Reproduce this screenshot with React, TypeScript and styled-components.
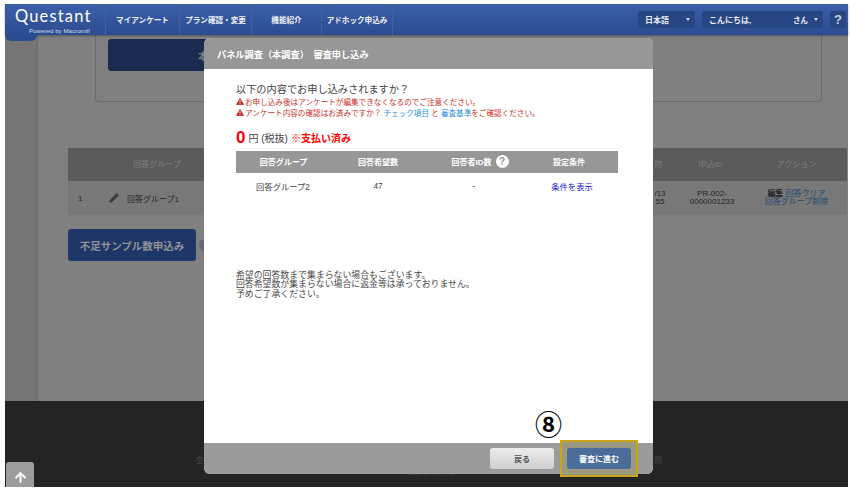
import styled, { createGlobalStyle } from "styled-components"
import { ArrowUp, Pencil } from "lucide-react"

const jp = `"Liberation Sans", "Noto Sans CJK JP", sans-serif`

const GlobalStyle = createGlobalStyle`
  html, body {
    margin: 0;
    padding: 0;
    background: #fff;
    overflow: hidden;
  }
  * {
    box-sizing: border-box;
  }
`

const WarnIcon = () => (
  <WarnSvg viewBox="0 0 16 14" aria-hidden="true">
    <path d="M8 .5 15.6 13.5H.4Z" fill="#b92a26" stroke="#b92a26" strokeLinejoin="round" />
    <path d="M8 4.5v4.5M8 10.5v1.6" stroke="#fff" strokeWidth="1.8" />
  </WarnSvg>
)

const App = () => {
  return (
    <>
      <GlobalStyle />
      <Screen>
        <Header>
          <Logo>
            <LogoName>Questant</LogoName>
            <LogoSub>Powered by Macromill</LogoSub>
          </Logo>
          <NavItem $w={74}>マイアンケート</NavItem>
          <NavItem $w={72}>プラン確認・変更</NavItem>
          <NavItem $w={70}>機能紹介</NavItem>
          <NavItem $w={71}>アドホック申込み</NavItem>
          <HeaderRight>
            <Pill $w={57}>
              日本語
              <Caret />
            </Pill>
            <Pill $w={121}>
              こんにちは,
              <UserName>さん</UserName>
              <Caret />
            </Pill>
            <Help>?</Help>
          </HeaderRight>
        </Header>

        <Main>
          <SideBand />
          <Content>
            <Panel>
              <PanelButton>本</PanelButton>
            </Panel>
            <Table>
              <TableHead>
                <Cell $w={178}>回答グループ</Cell>
                <Cell $w={396} />
                <Cell $w={33}>時</Cell>
                <Cell $w={71}>申込ID</Cell>
                <Cell $w={101}>アクション</Cell>
              </TableHead>
              <TableRow>
                <NumCell>1</NumCell>
                <GroupCell>
                  <Pencil size={10} fill="#3a3a3a" color="#3a3a3a" />
                  回答グループ1
                </GroupCell>
                <Cell $w={422} />
                <Cell $w={36}>
                  /13
                  <br />
                  55
                </Cell>
                <Cell $w={68}>
                  PR-002-
                  <br />
                  0000001233
                </Cell>
                <Cell $w={101}>
                  <b>編集</b> <DimLink>回答クリア</DimLink>
                  <br />
                  <DimLink>回答グループ削除</DimLink>
                </Cell>
              </TableRow>
            </Table>
            <ShortageRow>
              <ShortageButton>不足サンプル数申込み</ShortageButton>
              <RoundHint />
            </ShortageRow>
          </Content>
        </Main>

        <Footer>
          <FooterLinks>
            <span>会</span>
            <span>問</span>
          </FooterLinks>
          <Copyright>© Macromill, Inc.</Copyright>
          <TopButton>
            <ArrowUp size={15} strokeWidth={3.2} />
          </TopButton>
        </Footer>

        <Modal>
          <ModalHeader>パネル調査（本調査）　審査申し込み</ModalHeader>
          <ModalBody>
            <Question>以下の内容でお申し込みされますか？</Question>
            <Warning>
              <WarnIcon />
              お申し込み後はアンケートが編集できなくなるのでご注意ください。
            </Warning>
            <Warning>
              <WarnIcon />
              アンケート内容の確認はお済みですか？ <BlueLink>チェック項目</BlueLink> と <BlueLink>審査基準</BlueLink>をご確認ください。
            </Warning>
            <Price>
              <Zero>0</Zero>
              <Yen>円 (税抜)</Yen>
              <Paid>※支払い済み</Paid>
            </Price>
            <ModalTable>
              <ModalHeadRow>
                <ModalCol>回答グループ</ModalCol>
                <ModalCol>回答希望数</ModalCol>
                <ModalCol>
                  回答者ID数
                  <HelpDot>?</HelpDot>
                </ModalCol>
                <ModalCol>設定条件</ModalCol>
              </ModalHeadRow>
              <ModalRow>
                <ModalCol>回答グループ2</ModalCol>
                <ModalCol>47</ModalCol>
                <ModalCol>-</ModalCol>
                <ModalCol>
                  <ConditionLink>条件を表示</ConditionLink>
                </ModalCol>
              </ModalRow>
            </ModalTable>
            <Notice>
              希望の回答数まで集まらない場合もございます。
              <br />
              回答希望数が集まらない場合に返金等は承っておりません。
              <br />
              予めご了承ください。
            </Notice>
          </ModalBody>
          <ModalFooter>
            <BackButton>戻る</BackButton>
            <Highlight>
              <NextButton>審査に進む</NextButton>
            </Highlight>
            <StepMark>⑧</StepMark>
          </ModalFooter>
        </Modal>
      </Screen>
    </>
  )
}

const Screen = styled.div`
  position: relative;
  width: 843px;
  height: 483px;
  margin: 4px 0 0 5px;
  background: #808080;
  display: flex;
  flex-direction: column;
  font-family: ${jp};
`

const Header = styled.header`
  position: relative;
  height: 31px;
  flex: none;
  display: flex;
  align-items: stretch;
  padding-right: 2px;
  background: linear-gradient(#3c5fa8, #2c4c92);
  box-shadow: 0 1px 2px rgba(0, 0, 0, 0.35);
  z-index: 1;
`

const Logo = styled.div`
  position: relative;
  width: 101px;
  flex: none;
  color: #fff;
  border-right: 1px solid #40619f;
  &::after {
    content: "";
    position: absolute;
    left: 0;
    top: 31px;
    width: 32px;
    height: 6px;
    background: #2c4c92;
    border-radius: 0 0 16px 16px;
  }
`

const LogoName = styled.div`
  font: 400 16.5px/1 "Lato", sans-serif;
  letter-spacing: 1.15px;
  margin: 4px 0 0 10px;
`

const LogoSub = styled.div`
  font: 400 6.2px/1 "Liberation Sans", sans-serif;
  color: #cfd8ea;
  margin: 3px 0 0 24px;
`

const NavItem = styled.div<{ $w: number }>`
  width: ${(p) => p.$w}px;
  flex: none;
  display: flex;
  align-items: center;
  justify-content: center;
  color: #eef1f7;
  font-size: 7.6px;
  font-weight: 700;
  white-space: nowrap;
  border-right: 1px solid #40619f;
`

const HeaderRight = styled.div`
  margin-left: auto;
  display: flex;
  align-items: center;
  gap: 7px;
`

const Pill = styled.div<{ $w: number }>`
  width: ${(p) => p.$w}px;
  height: 17px;
  padding: 0 5px 0 7px;
  display: flex;
  align-items: center;
  background: #294684;
  border-radius: 3px;
  color: #e8ecf4;
  font-size: 8px;
  font-weight: 700;
`

const UserName = styled.span`
  margin-left: auto;
  margin-right: 6px;
  font-size: 7.5px;
`

const Caret = styled.i`
  width: 0;
  height: 0;
  margin-left: auto;
  border: 2.5px solid transparent;
  border-top: 3px solid #d5dbe8;
  border-bottom: 0;
  ${UserName} + & {
    margin-left: 0;
  }
`

const Help = styled.div`
  width: 16px;
  height: 17px;
  display: flex;
  align-items: center;
  justify-content: center;
  background: #294684;
  border-radius: 3px;
  color: #c9d1e2;
  font: 700 13px/1 "Liberation Sans", sans-serif;
`

const Main = styled.main`
  flex: 1;
  display: flex;
  min-height: 0;
`

const SideBand = styled.div`
  width: 32px;
  flex: none;
  background: #757575;
`

const Content = styled.div`
  flex: 1;
  min-width: 0;
  padding-left: 30px;
  display: flex;
  flex-direction: column;
  align-items: flex-start;
  border-left: 1px solid #6e6e6e;
`

const Panel = styled.div`
  width: 727px;
  height: 67px;
  margin-left: 27px;
  padding: 4px 0 0 12px;
  border: 1px solid #6b6b6b;
  border-top: 0;
  border-radius: 0 0 4px 4px;
`

const PanelButton = styled.div`
  width: 140px;
  height: 32px;
  padding-left: 90px;
  display: flex;
  align-items: center;
  background: #1b2b50;
  border-radius: 3px;
  color: #7c7c7c;
  font-size: 10px;
  font-weight: 700;
  white-space: nowrap;
`

const Table = styled.div`
  width: 779px;
  margin-top: 46px;
  font-size: 8px;
`

const TableHead = styled.div`
  height: 33px;
  display: flex;
  align-items: center;
  padding-top: 2px;
  background: #5b5b5b;
  color: #7e7e7e;
`

const TableRow = styled.div`
  height: 34px;
  display: flex;
  align-items: center;
  background: #787878;
  color: #262626;
`

const Cell = styled.div<{ $w?: number }>`
  width: ${(p) => p.$w}px;
  flex: none;
  text-align: center;
  line-height: 8.5px;
  white-space: nowrap;
`

const NumCell = styled.div`
  width: 41px;
  flex: none;
  padding-left: 10px;
`

const GroupCell = styled.div`
  width: 111px;
  flex: none;
  display: flex;
  align-items: center;
  gap: 8px;
`

const DimLink = styled.span`
  color: #1f4a70;
`

const ShortageRow = styled.div`
  margin-top: 14px;
  display: flex;
  align-items: center;
  gap: 3px;
`

const ShortageButton = styled.div`
  width: 128px;
  height: 32px;
  display: flex;
  align-items: center;
  justify-content: center;
  background: #1e3768;
  border-radius: 3px;
  color: #8f9196;
  font-size: 10.5px;
  font-weight: 700;
`

const RoundHint = styled.div`
  width: 12px;
  height: 12px;
  background: #6a6a6a;
  border-radius: 50%;
`

const Footer = styled.footer`
  position: relative;
  height: 86px;
  flex: none;
  padding-top: 53px;
  background: #242424;
  color: #4a4a4a;
  font-size: 8px;
`

const FooterLinks = styled.div`
  width: 466px;
  margin-left: 191px;
  display: flex;
  justify-content: space-between;
`

const Copyright = styled.div`
  margin: 3px 0 0 392px;
`

const TopButton = styled.div`
  position: absolute;
  left: 1px;
  bottom: 0;
  width: 28px;
  height: 25px;
  display: flex;
  align-items: center;
  justify-content: center;
  padding-top: 6px;
  background: #9c9c9c;
  border-radius: 3px 3px 0 0;
  color: #fff;
`

const Modal = styled.section`
  position: absolute;
  left: 199px;
  top: 34px;
  width: 449px;
  height: 436px;
  display: flex;
  flex-direction: column;
  background: #fff;
  border-radius: 6px;
  z-index: 2;
`

const ModalHeader = styled.div`
  height: 31px;
  flex: none;
  padding-left: 13px;
  display: flex;
  align-items: center;
  background: #979797;
  border-radius: 6px 6px 0 0;
  color: #fff;
  font-size: 9.2px;
  font-weight: 700;
`

const ModalBody = styled.div`
  flex: 1;
  padding: 14px 35px 0 32px;
  color: #444;
`

const Question = styled.div`
  font-size: 10.2px;
  line-height: 13px;
`

const Warning = styled.div`
  display: flex;
  align-items: center;
  height: 11px;
  color: #c8332e;
  font-size: 7.6px;
  white-space: pre;
`

const WarnSvg = styled.svg`
  width: 8px;
  height: 7px;
  flex: none;
  margin-right: 1px;
`

const BlueLink = styled.span`
  color: #2f8fe0;
`

const Price = styled.div`
  height: 21px;
  margin-top: 8.5px;
  display: flex;
  align-items: center;
`

const Zero = styled.span`
  color: #f00;
  font: 700 17px/1 "Liberation Sans", sans-serif;
  margin-right: 3px;
`

const Yen = styled.span`
  font-size: 10px;
  margin-right: 3px;
`

const Paid = styled.span`
  color: #f00;
  font-size: 10px;
  font-weight: 700;
`

const ModalTable = styled.div`
  width: 382px;
  margin-top: 3px;
  font-size: 8px;
`

const ModalHeadRow = styled.div`
  height: 22px;
  display: grid;
  grid-template-columns: 95px 94px 110px 68px;
  align-items: center;
  background: #979797;
  color: #fff;
  font-weight: 700;
  text-align: center;
`

const ModalRow = styled(ModalHeadRow)`
  height: 26px;
  grid-template-columns: 94px 96px 96px 100px;
  background: #fff;
  color: #444;
  font-weight: 400;
  font-size: 8.3px;
`

const ModalCol = styled.div`
  display: flex;
  align-items: center;
  justify-content: center;
  white-space: nowrap;
`

const HelpDot = styled.span`
  width: 13px;
  height: 13px;
  margin-left: 4px;
  display: inline-flex;
  align-items: center;
  justify-content: center;
  background: #fff;
  border-radius: 50%;
  color: #979797;
  font: 700 10px/1 "Liberation Sans", sans-serif;
`

const ConditionLink = styled.span`
  color: #2222cc;
`

const Notice = styled.div`
  margin-top: 72px;
  font-size: 8.9px;
  line-height: 9.5px;
  color: #4a4a4a;
`

const ModalFooter = styled.div`
  position: relative;
  height: 31px;
  flex: none;
  display: flex;
  align-items: center;
  justify-content: flex-end;
  padding-right: 21px;
  gap: 11px;
  background: #9b9b9b;
  border-radius: 0 0 6px 6px;
`

const BackButton = styled.div`
  width: 64px;
  height: 21px;
  display: flex;
  align-items: center;
  justify-content: center;
  background: linear-gradient(#ececec, #cfcfcf);
  border-radius: 3px;
  color: #555;
  font-size: 8px;
  font-weight: 700;
`

const Highlight = styled.div`
  width: 78px;
  height: 37px;
  margin: 0 -6px 0 -5px;
  display: flex;
  align-items: center;
  justify-content: center;
  background: #9b9a80;
  border: 2.5px solid #c9a51a;
`

const NextButton = styled.div`
  width: 64px;
  height: 21px;
  display: flex;
  align-items: center;
  justify-content: center;
  background: #4a6d9a;
  border-radius: 3px;
  color: #fff;
  font-size: 8px;
  font-weight: 700;
`

const StepMark = styled.div`
  position: absolute;
  left: 331px;
  top: -33px;
  color: #000;
  font: 700 27px/1 "Noto Sans CJK JP", sans-serif;
`

export default App
